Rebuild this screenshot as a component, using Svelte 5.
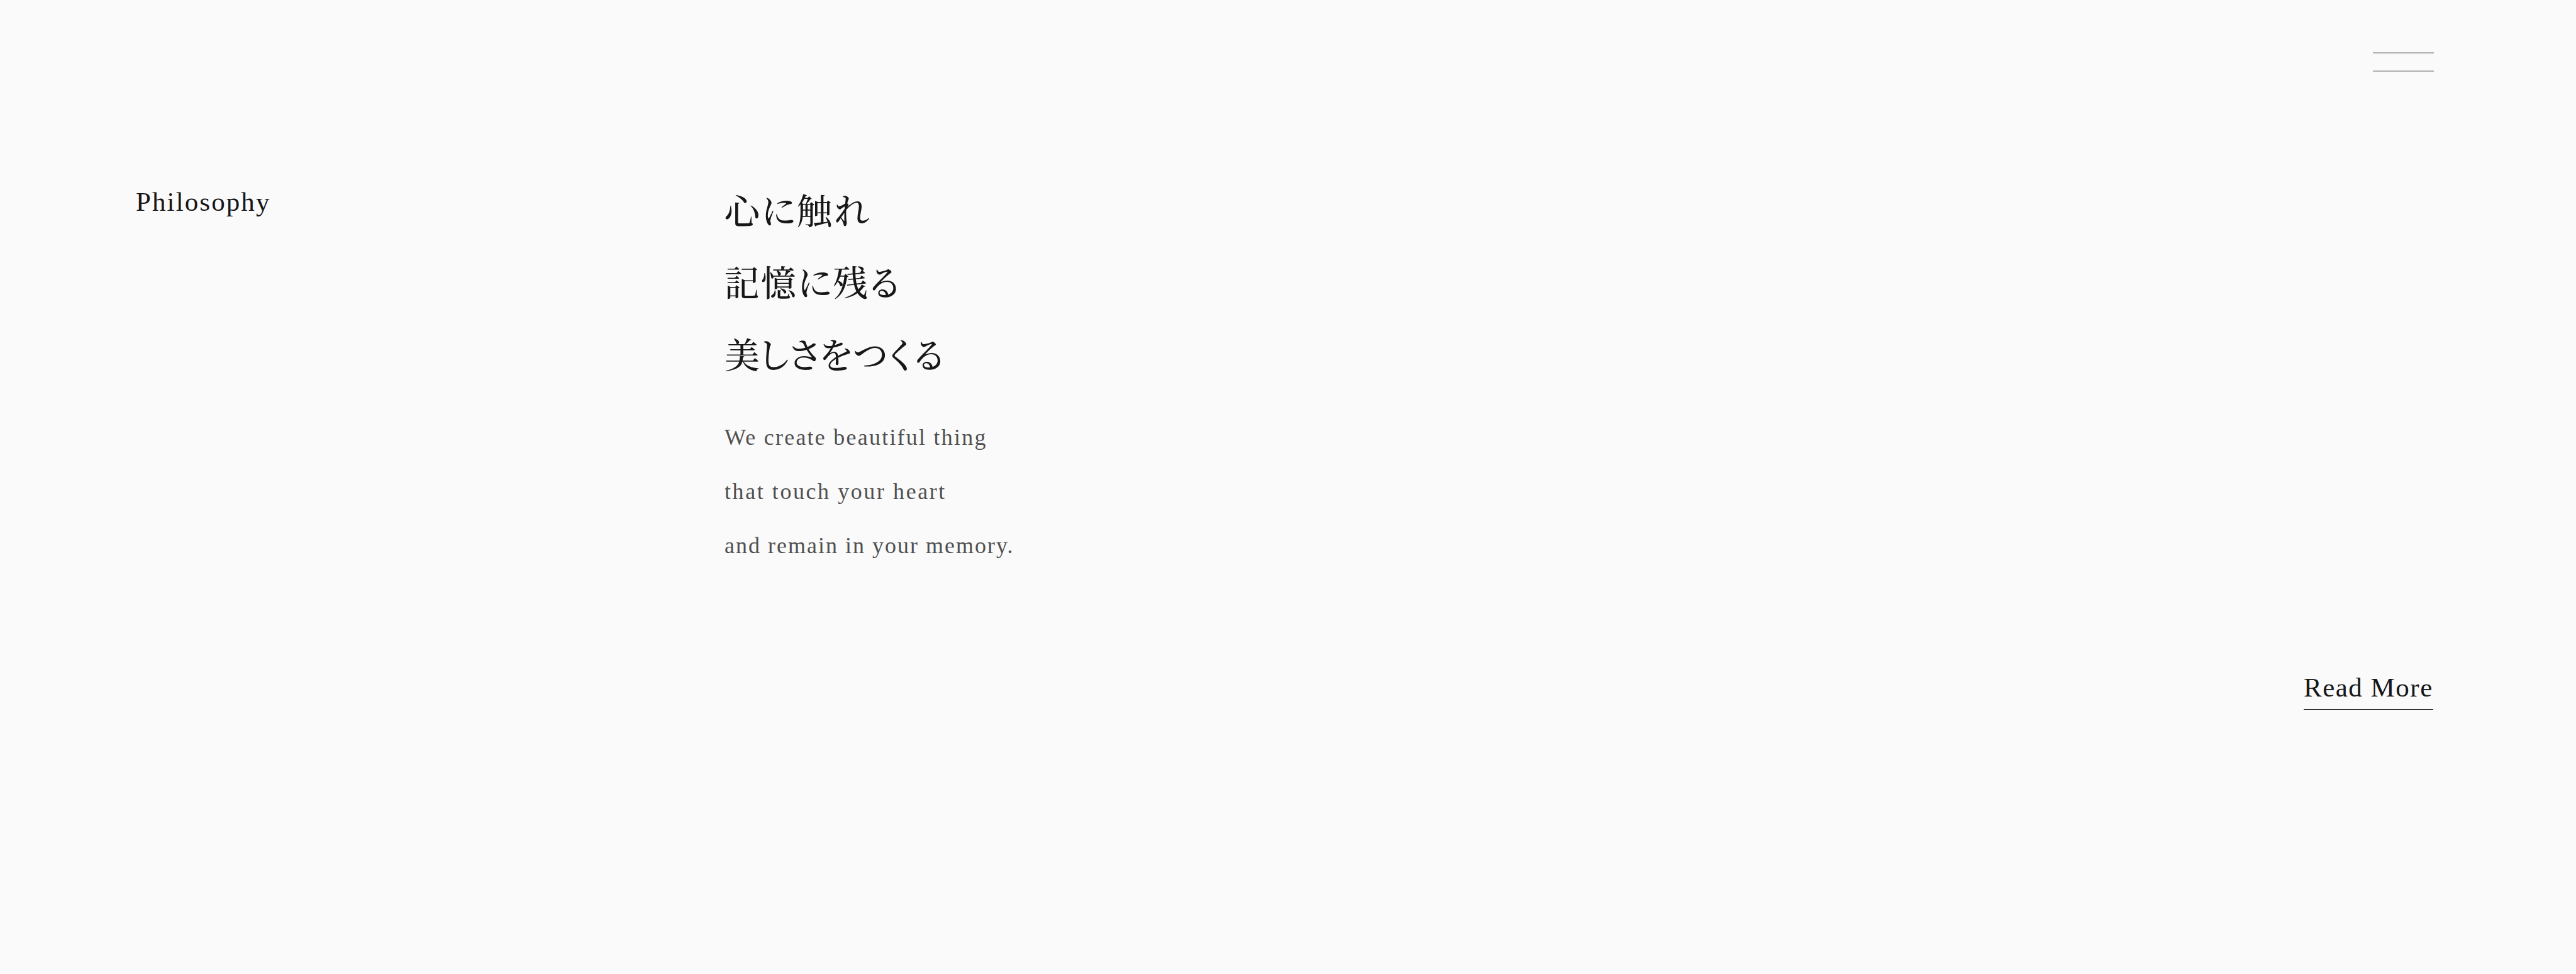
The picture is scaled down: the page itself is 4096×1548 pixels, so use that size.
<script>
    // Tracking is tuned line by line
    const copy = [
        { text: '心に触れ', tracking: 2.3 },
        { text: '記憶に残る', tracking: 1.9 },
        { text: '美しさをつくる', tracking: 0.3 }
    ];

    const lead = [
        { text: 'We create beautiful thing', tracking: 2.23 },
        { text: 'that touch your heart', tracking: 2.57 },
        { text: 'and remain in your memory.', tracking: 2 }
    ];
</script>

<div class="page">
    <header>
        <button class="menu" aria-label="Menu">
            <span></span>
            <span></span>
        </button>
    </header>

    <main>
        <section class="philosophy">
            <h2>Philosophy</h2>
            <div class="content">
                <p class="copy" lang="ja">
                    {#each copy as line}
                        <span style:letter-spacing="{line.tracking}px">{line.text}</span>
                    {/each}
                </p>
                <p class="lead">
                    {#each lead as line}
                        <span style:letter-spacing="{line.tracking}px">{line.text}</span>
                    {/each}
                </p>
            </div>
        </section>

        <div class="more">
            <a href="#philosophy">Read More</a>
        </div>
    </main>
</div>

<style>
    :global(body) {
        background: #fafafa;
    }

    .page {
        box-sizing: border-box;
        width: 4096px;
        height: 1548px;
        overflow: hidden;
        background: #fafafa;
        color: #171717;
        font-family: "Liberation Serif", "Noto Serif CJK JP", "Noto Sans CJK JP", serif;
    }

    header {
        display: flex;
        justify-content: flex-end;
        box-sizing: border-box;
        height: 275px;
        padding: 83px 226px 0 0;
    }

    .menu {
        display: flex;
        flex-direction: column;
        gap: 27px;
        width: 97px;
        height: 31px;
        padding: 0;
        border: 0;
        background: none;
    }

    .menu span {
        flex: none;
        width: 100%;
        height: 2px;
        background: #b0b0b0;
    }

    .philosophy {
        display: grid;
        grid-template-columns: 936px 1fr;
        padding: 0 226px 0 216px;
    }

    h2 {
        margin: 22px 0 0;
        font-size: 43px;
        font-weight: 400;
        line-height: 48px;
        letter-spacing: 2.1px;
    }

    .copy,
    .lead {
        display: flex;
        flex-direction: column;
        margin: 0;
        white-space: nowrap;
    }

    .copy {
        font-family: "Noto Serif CJK JP", "Noto Serif JP", "Noto Sans CJK JP", serif;
        font-size: 56px;
        font-weight: 500;
        line-height: 114.4px;
        font-feature-settings: "palt";
    }

    .lead {
        margin-top: 35px;
        color: #505050;
        font-size: 36px;
        line-height: 85.8px;
    }

    .more {
        display: flex;
        justify-content: flex-end;
        margin-top: 158px;
        padding-right: 227px;
    }

    .more a {
        box-sizing: border-box;
        width: 206px;
        height: 59px;
        border-bottom: 1px solid #171717;
        color: inherit;
        font-size: 43px;
        line-height: 47px;
        letter-spacing: 1.5px;
        text-decoration: none;
        white-space: nowrap;
    }
</style>
